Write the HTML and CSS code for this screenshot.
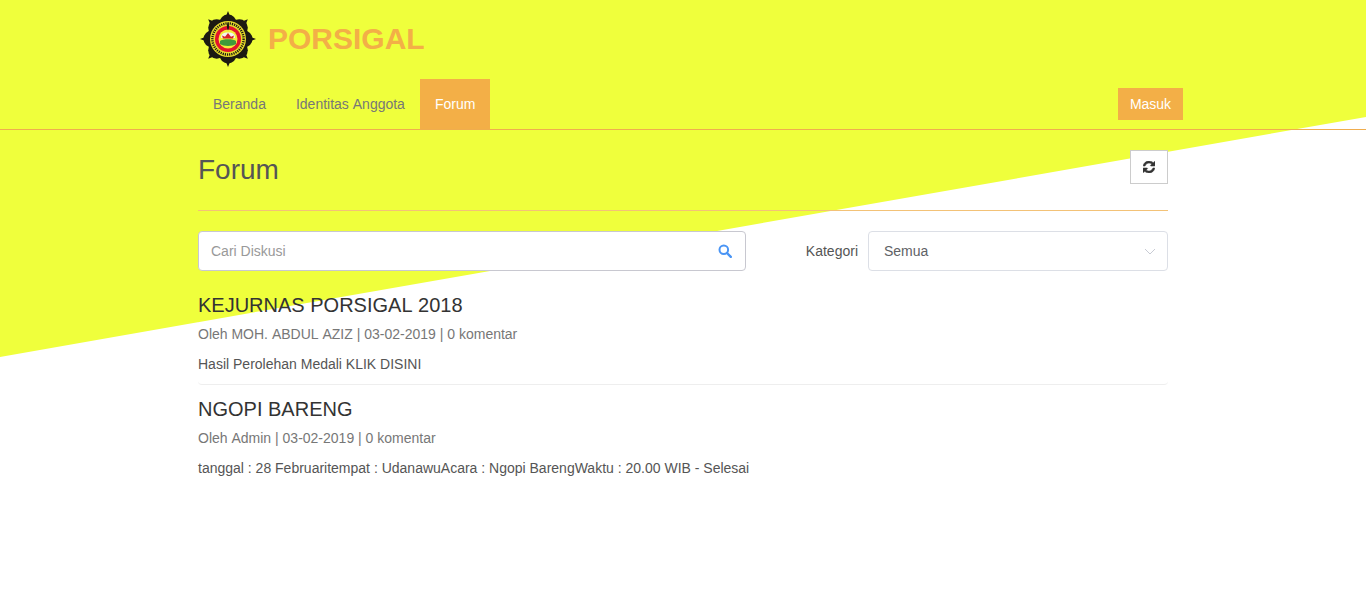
FILE: index.html
```html
<!DOCTYPE html>
<html lang="id">
<head>
<meta charset="utf-8">
<title>Forum - PORSIGAL</title>
<link rel="stylesheet" href="styles.css">
</head>
<body>
<div class="wedge"></div>
<header class="site-header">
  <div class="brand-row">
    <svg class="logo" width="60" height="62" viewBox="0 0 60 62" aria-label="Logo PORSIGAL">
      <g fill="#1c1a12">
        <path d="M30 3l1.800 4.500h-3.600zM30 59l-1.800-4.500h3.600zM2 31l4.500-1.800v3.600zM58 31l-4.500 1.800v-3.600z"/>
        <path d="M10.200 11.200l4.500 1.800-2.700 2.700zM49.800 50.800l-4.500-1.800 2.700-2.700zM49.800 11.200l-1.800 4.500-2.700-2.700zM10.200 50.800l1.800-4.500 2.700 2.700z"/>
      </g>
      <g fill="#1c1a12">
        <circle cx="30" cy="15" r="8.500"/><circle cx="30" cy="47" r="8.500"/>
        <circle cx="14" cy="31" r="8.500"/><circle cx="46" cy="31" r="8.500"/>
        <circle cx="18.700" cy="19.700" r="8.500"/><circle cx="41.300" cy="19.700" r="8.500"/>
        <circle cx="18.700" cy="42.300" r="8.500"/><circle cx="41.300" cy="42.300" r="8.500"/>
      </g>
      <circle cx="30" cy="31" r="18" fill="#e6da2a"/>
      <circle cx="30" cy="31" r="15.600" fill="none" stroke="#1c1a12" stroke-width="2.400" stroke-dasharray="1.200 1"/>
      <circle cx="30" cy="31" r="13" fill="#e3132c"/>
      <circle cx="30" cy="31" r="9.500" fill="#f2ee3a"/>
      <path d="M23 30c0-4 2-5.500 7-5.500s7 1.500 7 5.500z" fill="#f4f4f0"/>
      <path d="M24 27.500l3 1.200 3-3.700 3 3.700 3-1.200-1 3H25z" fill="#d8232a"/>
      <path d="M22 33c2-2.300 14-2.300 16 0v3c-3 2.500-13 2.500-16 0z" fill="#3f9a3a"/>
      <path d="M30 14c1.600 3 1.600 5.500 0 8.500-1.600-3-1.600-5.500 0-8.500z" fill="#1c1a12"/>
    </svg>
    <span class="brand-name">PORSIGAL</span>
  </div>
  <nav class="nav">
    <ul class="nav-list">
      <li><a class="nav-link" href="#">Beranda</a></li>
      <li><a class="nav-link" href="#">Identitas Anggota</a></li>
      <li><a class="nav-link active" href="#">Forum</a></li>
    </ul>
    <a class="login" href="#">Masuk</a>
  </nav>
</header>
<main class="content">
  <div class="page-head">
    <h1 class="page-title">Forum</h1>
    <button class="refresh" type="button" aria-label="Muat ulang">
      <svg width="12" height="12" viewBox="0 0 1536 1536"><path fill="#333" stroke="#333" stroke-width="70" d="M1511 928q0 5-1 7-64 268-268 434.500T764 1536q-146 0-282.500-55T238 1324l-129 129q-19 19-45 19t-45-19-19-45V960q0-26 19-45t45-19h448q26 0 45 19t19 45-19 45l-137 137q71 66 161 102t187 36q134 0 250-65t186-179q11-17 53-117 8-23 30-23h192q13 0 22.500 9.500t9.500 22.500zm25-800v448q0 26-19 45t-45 19h-448q-26 0-45-19t-19-45 19-45l138-138q-148-137-349-137-134 0-250 65T332 500q-11 17-53 117-8 23-30 23H50q-13 0-22.500-9.500T18 608v-7q65-268 270-434.500T768 0q146 0 284 55.500T1297 212l130-129q19-19 45-19t45 19 19 45z"/></svg>
    </button>
  </div>
  <div class="filters">
    <div class="search">
      <input class="search-input" type="text" placeholder="Cari Diskusi">
      <svg class="search-icon" width="14" height="14" viewBox="0 0 14 14"><circle cx="5.800" cy="5.800" r="4.300" fill="none" stroke="#4a95f5" stroke-width="2"/><path d="M9 9l3.800 3.800" stroke="#4a95f5" stroke-width="2.400" stroke-linecap="round"/></svg>
    </div>
    <div class="category">
      <span class="category-label">Kategori</span>
      <div class="select">
        <span>Semua</span>
        <svg width="12" height="7" viewBox="0 0 12 7"><path d="M1 1l5 5 5-5" fill="none" stroke="#c8cbd4" stroke-width="1"/></svg>
      </div>
    </div>
  </div>
  <div class="posts">
    <article class="post">
      <h2 class="post-title">KEJURNAS PORSIGAL 2018</h2>
      <p class="post-meta">Oleh MOH. ABDUL AZIZ | 03-02-2019 | 0 komentar</p>
      <p class="post-body">Hasil Perolehan Medali KLIK DISINI</p>
    </article>
    <article class="post">
      <h2 class="post-title">NGOPI BARENG</h2>
      <p class="post-meta">Oleh Admin | 03-02-2019 | 0 komentar</p>
      <p class="post-body">tanggal : 28 Februaritempat : UdanawuAcara : Ngopi BarengWaktu : 20.00 WIB - Selesai</p>
    </article>
  </div>
</main>
</body>
</html>
```
FILE: styles.css
```css
* { box-sizing: border-box; }
html, body { margin: 0; height: 100%; }
body {
  font-family: "Liberation Sans", Arial, sans-serif;
  font-size: 14px;
  font-kerning: none;
  color: #555;
  background: #fff;
  overflow: hidden;
  position: relative;
}
a { text-decoration: none; }
.wedge {
  position: absolute;
  left: 0;
  top: 0;
  width: 1366px;
  height: 357px;
  background: #efff3c;
  clip-path: polygon(0 0, 100% 0, 100% 117px, 0 100%);
  z-index: -1;
}
.site-header {
  position: relative;
  height: 130px;
  padding: 0 183px 0 198px;
  border-bottom: 1px solid #f0ad4e;
}
.brand-row {
  display: flex;
  align-items: center;
  height: 77px;
  margin-bottom: 2px;
}
.logo { flex: none; margin-right: 10px; margin-top: 1px; }
.brand-name {
  font-size: 30px;
  font-weight: 700;
  color: #f3af47;
}
.nav {
  display: flex;
  justify-content: space-between;
  height: 50px;
}
.nav-list {
  display: flex;
  list-style: none;
  margin: 0;
  padding: 0;
}
.nav-link {
  display: block;
  padding: 0 15px;
  line-height: 50px;
  color: #777;
}
.nav-link.active {
  background: #f3af47;
  color: #fff;
}
.login {
  align-self: flex-start;
  margin-top: 9px;
  width: 65px;
  height: 32px;
  line-height: 32px;
  text-align: center;
  background: #f3af47;
  color: #fff;
}
.content {
  width: 970px;
  margin-left: 198px;
}
.page-head {
  display: flex;
  justify-content: space-between;
  align-items: flex-start;
  height: 81px;
  padding-top: 20px;
  border-bottom: 1px solid #f3c277;
}
.page-title {
  margin: 0;
  font-size: 28px;
  font-weight: 400;
  line-height: 39px;
  color: #555;
}
.refresh {
  display: flex;
  align-items: center;
  justify-content: center;
  width: 38px;
  height: 34px;
  padding: 0;
  background: #fff;
  border: 1px solid #ccc;
}
.filters {
  display: flex;
  justify-content: space-between;
  margin-top: 20px;
}
.search {
  position: relative;
  width: 548px;
}
.search-input {
  display: block;
  width: 100%;
  height: 40px;
  padding: 0 12px;
  font: inherit;
  font-kerning: none;
  color: #555;
  background: #fff;
  border: 1px solid #c8c8d0;
  border-radius: 4px;
}
.search-input::placeholder { color: #999; opacity: 1; }
.search-icon {
  position: absolute;
  right: 14px;
  top: 13px;
}
.category {
  display: flex;
  align-items: center;
  gap: 10px;
}
.category-label { color: #555; }
.select {
  display: flex;
  align-items: center;
  justify-content: space-between;
  width: 300px;
  height: 40px;
  padding: 0 11px 0 15px;
  color: #606266;
  background: #fff;
  border: 1px solid #dcdfe6;
  border-radius: 4px;
}
.posts { margin-top: 10px; }
.post {
  padding: 12px 0 10px;
  border-bottom: 1px solid #eee;
  border-radius: 4px;
}
.post:last-child { border-bottom: 0; }
.post-title {
  margin: 0;
  font-size: 20px;
  font-weight: 400;
  line-height: 24px;
  color: #333;
}
.post-meta {
  margin: 7px 0 0;
  line-height: 20px;
  color: #777;
}
.post-body {
  margin: 10px 0 0;
  line-height: 20px;
  color: #555;
  font-kerning: normal;
}
```
